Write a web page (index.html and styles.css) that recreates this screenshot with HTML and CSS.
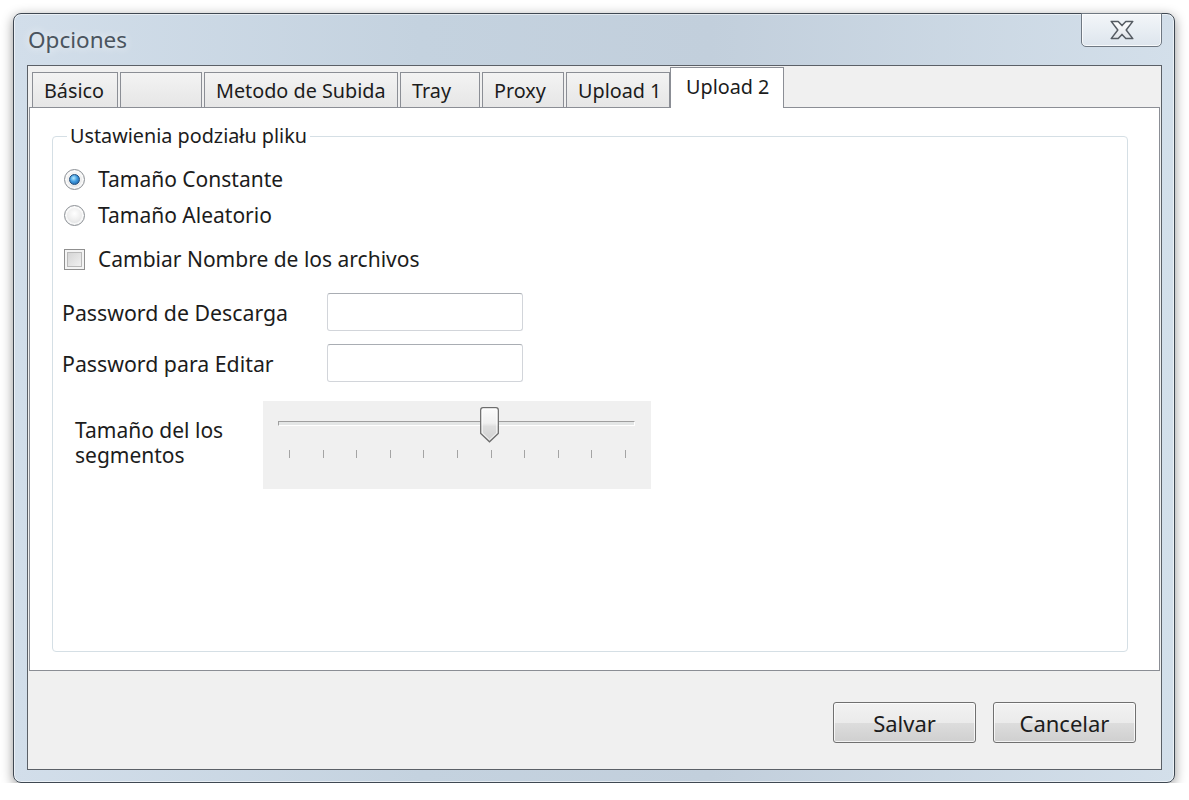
FILE: index.html
```html
<!DOCTYPE html>
<html lang="es">
<head>
<meta charset="utf-8">
<title>Opciones</title>
<link rel="stylesheet" href="styles.css">
</head>
<body>
<div class="window">
  <div class="titlebar">
    <span class="title">Opciones</span>
    <div class="close">
      <svg width="24" height="20" viewBox="0 0 24 20">
        <defs>
          <linearGradient id="xg" x1="0" y1="0" x2="0" y2="1">
            <stop offset="0" stop-color="#ffffff"/>
            <stop offset="1" stop-color="#dfe3e8"/>
          </linearGradient>
        </defs>
        <path d="M1.2 1.4 H8.2 L12 5.6 L15.8 1.4 H22.8 L16.2 10 L22.8 18.6 H15.8 L12 14.4 L8.2 18.6 H1.2 L7.8 10 Z" fill="url(#xg)" stroke="#555b62" stroke-width="1.5" stroke-linejoin="round"/>
      </svg>
    </div>
  </div>
  <div class="client">
    <div class="tabs">
      <div class="tab tab-basico">Básico</div>
      <div class="tab tab-blank"></div>
      <div class="tab tab-metodo">Metodo de Subida</div>
      <div class="tab tab-tray">Tray</div>
      <div class="tab tab-proxy">Proxy</div>
      <div class="tab tab-up1">Upload 1</div>
      <div class="tab tab-up2 active">Upload 2</div>
    </div>
    <div class="panel">
      <div class="group">
        <span class="legend">Ustawienia podziału pliku</span>
        <div class="opt opt-first"><span class="radio checked"></span><span>Tamaño Constante</span></div>
        <div class="opt opt-second"><span class="radio"></span><span>Tamaño Aleatorio</span></div>
        <div class="opt opt-check"><span class="checkbox"></span><span>Cambiar Nombre de los archivos</span></div>
        <div class="field field-first"><span class="field-label">Password de Descarga</span><span class="input"></span></div>
        <div class="field field-second"><span class="field-label">Password para Editar</span><span class="input"></span></div>
        <div class="slider-row">
          <span class="slider-label">Tamaño del los<br>segmentos</span>
          <div class="slider-panel">
            <div class="track"></div>
            <div class="ticks">
              <i></i><i></i><i></i><i></i><i></i><i></i><i></i><i></i><i></i><i></i><i></i>
            </div>
            <svg class="thumb" width="19" height="36" viewBox="0 0 19 36">
              <defs>
                <linearGradient id="tg" x1="0" y1="0" x2="0" y2="1">
                  <stop offset="0" stop-color="#fcfcfc"/>
                  <stop offset="0.45" stop-color="#f0f0f0"/>
                  <stop offset="0.55" stop-color="#dedede"/>
                  <stop offset="1" stop-color="#cfcfcf"/>
                </linearGradient>
              </defs>
              <path d="M3 0.7 H16 Q18.3 0.7 18.3 3 V26.5 L9.5 34.8 L0.7 26.5 V3 Q0.7 0.7 3 0.7 Z" fill="url(#tg)" stroke="#6d6d6d" stroke-width="1.3"/>
              <path d="M3 2.2 H16 Q16.8 2.2 16.8 3 V25.9 L9.5 32.8 L2.2 25.9 V3 Q2.2 2.2 3 2.2 Z" fill="none" stroke="#ffffff" stroke-opacity="0.8" stroke-width="1"/>
            </svg>
          </div>
        </div>
      </div>
    </div>
    <div class="footer">
      <button class="btn">Salvar</button>
      <button class="btn">Cancelar</button>
    </div>
  </div>
</div>
</body>
</html>
```
FILE: styles.css
```css
html, body {
  margin: 0;
  background: #ffffff;
}

body {
  font-family: "Noto Sans", "Liberation Sans", sans-serif;
  font-size: 21px;
  color: #1c1c1c;
}

.window {
  margin: 13px 0 0 13px;
  width: 1162px;
  height: 770px;
  box-sizing: border-box;
  border: 1px solid #3f4852;
  border-radius: 8px;
  background: linear-gradient(90deg, #d2deea 0%, #c4d2df 35%, #c2cfdc 60%, #d3dfea 100%);
  box-shadow: 0 3px 12px rgba(0, 0, 0, 0.42), inset 0 0 0 1px rgba(255, 255, 255, 0.55);
  display: flex;
  flex-direction: column;
}

.titlebar {
  flex: none;
  height: 51px;
  display: flex;
  justify-content: space-between;
  align-items: flex-start;
}

.title {
  margin: 13px 0 0 14px;
  line-height: 26px;
  font-size: 22.5px;
  color: #4a545e;
  text-shadow: 0 0 8px rgba(255, 255, 255, 0.9);
}

.close {
  width: 81px;
  height: 34px;
  margin: -1px 12px 0 0;
  box-sizing: border-box;
  border: 1px solid #6f7882;
  border-radius: 0 0 5px 5px;
  background: linear-gradient(#f3f6f9, #dde5ed);
  box-shadow: inset 0 0 0 1px rgba(255, 255, 255, 0.75);
  display: flex;
  align-items: center;
  justify-content: center;
}

.client {
  flex: 1;
  margin: 0 12px 12px 13px;
  border: 1px solid #5b6067;
  background: #f0f0f0;
  display: flex;
  flex-direction: column;
  min-height: 0;
}

.tabs {
  flex: none;
  height: 41px;
  display: flex;
  align-items: flex-end;
  gap: 2px;
  padding-left: 4px;
  position: relative;
  z-index: 1;
  font-size: 19.8px;
}

.tab {
  height: 35px;
  box-sizing: border-box;
  border: 1px solid #8b8e95;
  border-bottom: none;
  background: linear-gradient(#f3f3f3, #e6e6e6);
  padding: 2px 0 0 11px;
  line-height: 32px;
  white-space: nowrap;
  color: #1c1c1c;
}

.tab-basico { width: 86px; }
.tab-blank { width: 82px; }
.tab-metodo { width: 194px; }
.tab-tray { width: 80px; }
.tab-proxy { width: 82px; }
.tab-up1 { width: 104px; }

.tab.active {
  width: 114px;
  height: 41px;
  margin: 0 0 -1px -2px;
  padding: 0 0 0 15px;
  line-height: 38px;
  background: #ffffff;
}

.panel {
  flex: none;
  height: 564px;
  box-sizing: border-box;
  margin: 0 1px;
  border: 1px solid #8b8e95;
  background: #ffffff;
  padding: 28px 31px 18px 22px;
  display: flex;
}

.group {
  flex: 1;
  border: 1px solid #d5dfe5;
  border-radius: 4px;
  position: relative;
  padding: 30px 0 0 11px;
  display: flex;
  flex-direction: column;
  align-items: flex-start;
}

.legend {
  position: absolute;
  top: -13px;
  left: 14px;
  padding: 0 3px;
  background: #ffffff;
  line-height: 24px;
  font-size: 19.8px;
}

.opt {
  display: flex;
  align-items: center;
  height: 24px;
  gap: 13px;
}

.opt-second { margin-top: 12px; }
.opt-check { margin-top: 20px; }

.radio {
  width: 21px;
  height: 21px;
  box-sizing: border-box;
  border-radius: 50%;
  border: 1px solid #8d9196;
  background: radial-gradient(circle at 50% 40%, #ffffff 0%, #eeeeee 45%, #cfd2d5 100%);
  box-shadow: inset 0 0 0 2px rgba(255, 255, 255, 0.7);
  display: flex;
  align-items: center;
  justify-content: center;
}

.radio.checked::after {
  content: "";
  width: 11px;
  height: 11px;
  border-radius: 50%;
  box-sizing: border-box;
  border: 1px solid #1d4c7c;
  background: radial-gradient(circle at 40% 35%, #b8ecff 0%, #3e9ae0 45%, #1a5597 100%);
}

.checkbox {
  width: 21px;
  height: 21px;
  box-sizing: border-box;
  border: 1px solid #8f8f8f;
  background: linear-gradient(135deg, #cfcfcf, #f6f6f6);
  box-shadow: inset 0 0 0 2px #f4f4f4, inset 0 0 0 3px #b9b9b9;
}

.field {
  display: flex;
  align-items: center;
  margin-left: -2px;
  font-size: 21.3px;
}

.field-first { margin-top: 22px; }
.field-second { margin-top: 13px; }

.field-label {
  width: 265px;
}

.input {
  width: 196px;
  height: 38px;
  box-sizing: border-box;
  border: 1px solid #d2d5da;
  border-top-color: #a9adb3;
  border-radius: 3px;
  background: #ffffff;
}

.slider-row {
  display: flex;
  margin: 19px 0 0 11px;
}

.slider-label {
  width: 188px;
  padding-top: 17px;
  line-height: 25px;
}

.slider-panel {
  width: 388px;
  height: 88px;
  background: #f0f0f0;
  position: relative;
  padding-top: 20px;
  box-sizing: border-box;
}

.track {
  margin-left: 15px;
  width: 357px;
  height: 5px;
  box-sizing: border-box;
  border-top: 1px solid #9f9f9f;
  border-left: 1px solid #9f9f9f;
  border-bottom: 1px solid #ffffff;
  border-right: 1px solid #ffffff;
  background: #e4e6e6;
}

.ticks {
  margin: 24px 0 0 26px;
  width: 337px;
  height: 8px;
  display: flex;
  justify-content: space-between;
}

.ticks i {
  width: 1px;
  height: 8px;
  background: #a4a4a4;
}

.thumb {
  position: absolute;
  left: 217px;
  top: 6px;
}

.footer {
  flex: 1;
  display: flex;
  justify-content: flex-end;
  align-items: flex-start;
  padding: 31px 25px 0 0;
  gap: 17px;
}

.btn {
  width: 143px;
  height: 41px;
  box-sizing: border-box;
  border: 1px solid #707070;
  border-radius: 3px;
  background: linear-gradient(#f2f2f2 0%, #ebebeb 50%, #dddddd 51%, #cfcfcf 100%);
  box-shadow: inset 0 0 0 1px rgba(255, 255, 255, 0.75);
  font-family: inherit;
  font-size: 22px;
  color: #1c1c1c;
  padding: 0;
}
```
